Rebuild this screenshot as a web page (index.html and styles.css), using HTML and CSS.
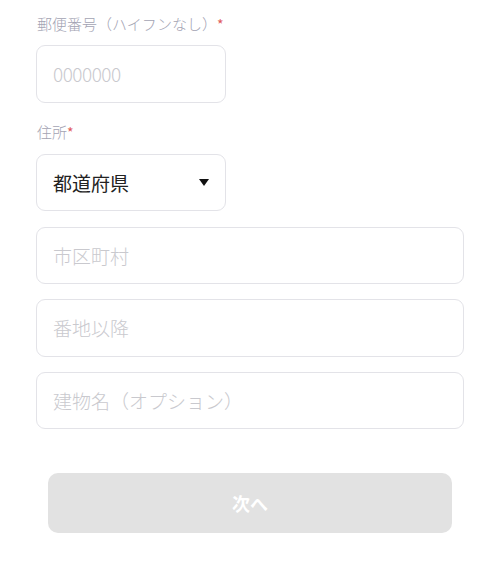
FILE: index.html
```html
<!DOCTYPE html>
<html lang="ja">
<head>
<meta charset="utf-8">
<link rel="stylesheet" href="styles.css">
</head>
<body>
<form class="form">
  <div class="field">
    <label class="label">郵便番号（ハイフンなし）<span class="req">*</span></label>
    <input class="input input-short input-digits" type="text" placeholder="0000000">
  </div>
  <div class="field field-address">
    <label class="label">住所<span class="req">*</span></label>
    <div class="select input-short">
      <span class="select-text">都道府県</span>
      <span class="caret"></span>
    </div>
    <input class="input" type="text" placeholder="市区町村">
    <input class="input" type="text" placeholder="番地以降">
    <input class="input" type="text" placeholder="建物名（オプション）">
  </div>
  <div class="actions">
    <button class="btn" type="button">次へ</button>
  </div>
</form>
</body>
</html>
```
FILE: styles.css
```css
* { box-sizing: border-box; }
html, body {
  margin: 0;
  padding: 0;
  background: #ffffff;
  font-family: "Noto Sans CJK JP", "Noto Sans", sans-serif;
}
.form {
  padding: 14px 36px 0 36px;
  width: 500px;
  display: flex;
  flex-direction: column;
}
.field {
  display: flex;
  flex-direction: column;
}
.field-address {
  margin-top: 19px;
}
.label {
  font-size: 15px;
  line-height: 20px;
  font-weight: 300;
  color: #a3a3b3;
  margin-bottom: 11px;
  padding-left: 1px;
}
.field-address .label { margin-bottom: 12px; }
.req { color: #e05a5a; margin-left: 0; font-weight: 400; font-size: 14px; }
.input, .select {
  height: 57.5px;
  width: 428px;
  border: 1px solid #e3e3e8;
  border-radius: 9px;
  padding: 0 16px;
  font-family: "Noto Sans CJK JP", "Noto Sans", sans-serif;
  font-size: 19px;
  color: #222;
  background: #fff;
  outline: none;
}
.input::placeholder { color: #c9c9ce; font-weight: 300; }
.input-short { width: 190px; }
.input-digits { letter-spacing: -0.5px; }
.field-address .input { margin-top: 15px; }
.field-address .select + .input { margin-top: 15.5px; }
.select {
  display: flex;
  align-items: center;
  justify-content: space-between;
  color: #222;
}
.select-text { line-height: 1; }
.caret {
  width: 0;
  height: 0;
  border-left: 5px solid transparent;
  border-right: 5px solid transparent;
  border-top: 7px solid #111;
}
.actions {
  padding: 44px 12px 0 12px;
}
.btn {
  width: 404px;
  height: 60px;
  border: none;
  border-radius: 10px;
  background: #e2e2e2;
  color: #ffffff;
  font-family: "Noto Sans CJK JP", "Noto Sans", sans-serif;
  font-size: 18px;
  font-weight: 700;
}
```
